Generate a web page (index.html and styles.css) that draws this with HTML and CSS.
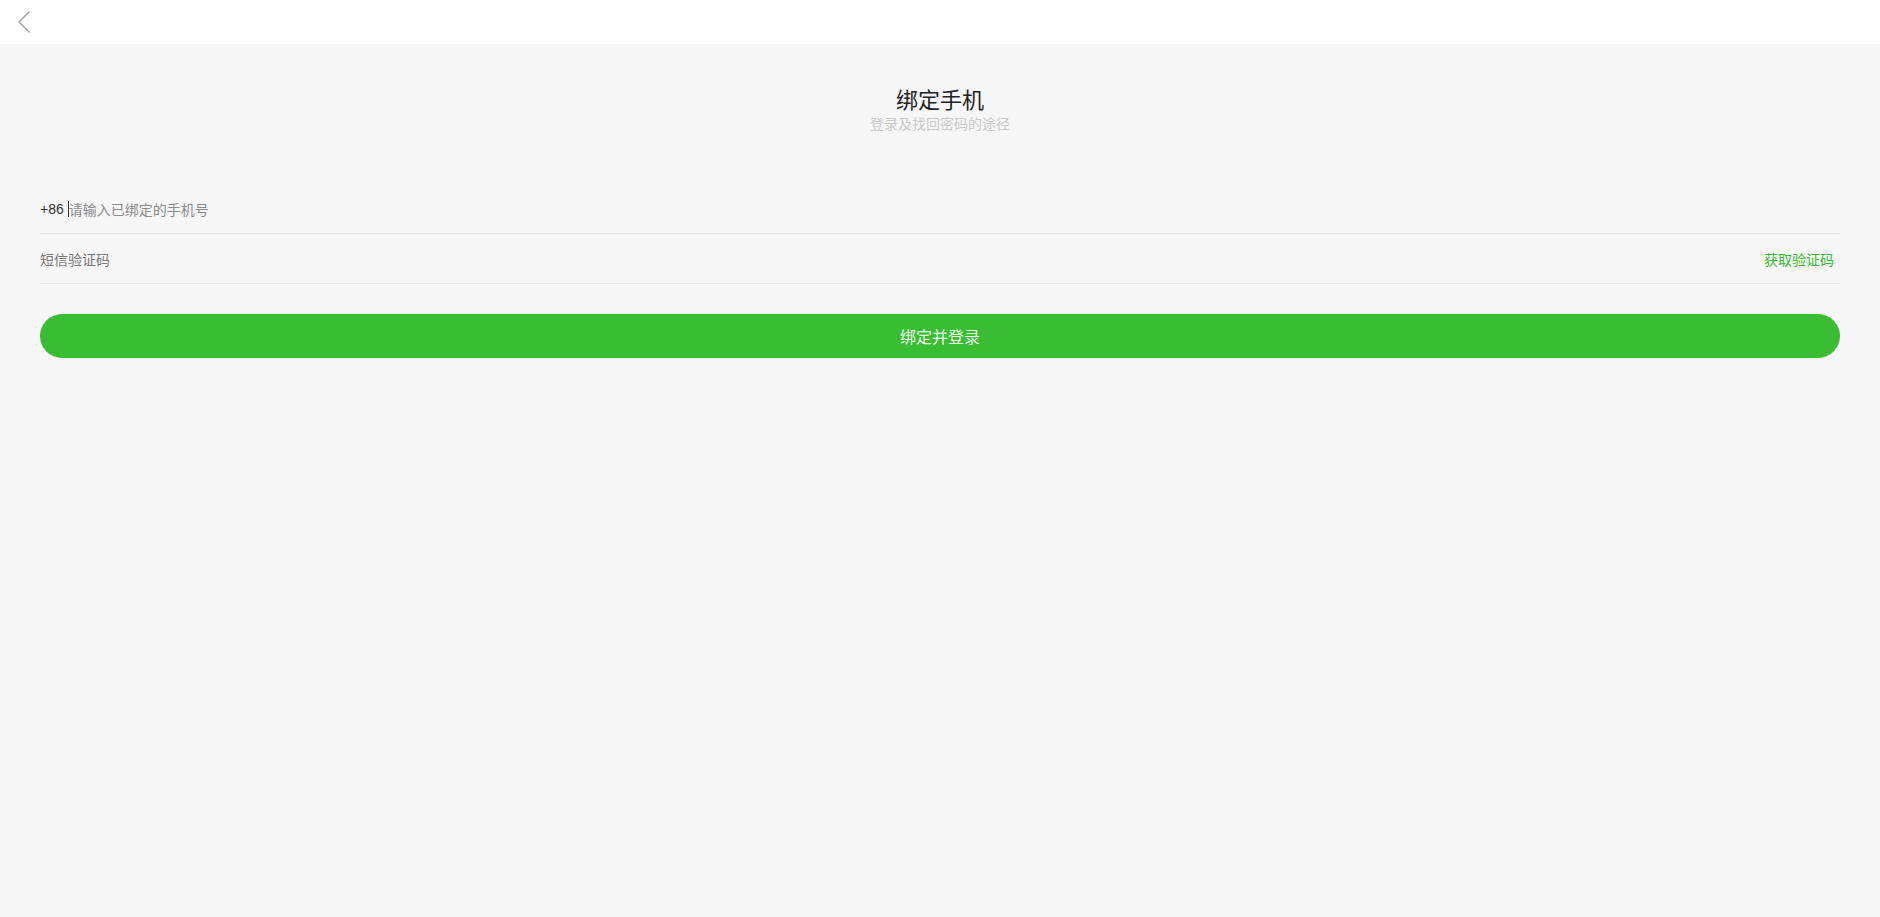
FILE: index.html
```html
<!DOCTYPE html>
<html lang="zh-CN">
<head>
<meta charset="utf-8">
<title>绑定手机</title>
<link rel="stylesheet" href="styles.css">
</head>
<body>
<header class="topbar">
  <button class="back" aria-label="返回">
    <svg width="14" height="22" viewBox="0 0 14 22"><path d="M12 1 L2 11 L12 21" fill="none" stroke="#a6a6a6" stroke-width="1.6" stroke-linecap="round" stroke-linejoin="round"/></svg>
  </button>
</header>
<main class="page">
  <div class="heading">
    <h1 class="title">绑定手机</h1>
    <p class="subtitle">登录及找回密码的途径</p>
  </div>
  <form class="form">
    <div class="row">
      <span class="prefix">+86</span>
      <span class="cursor"></span>
      <span class="placeholder">请输入已绑定的手机号</span>
    </div>
    <div class="row">
      <span class="placeholder code">短信验证码</span>
      <span class="getcode">获取验证码</span>
    </div>
    <button type="button" class="submit">绑定并登录</button>
  </form>
</main>
</body>
</html>
```
FILE: styles.css
```css
* { box-sizing: border-box; }
html, body {
  margin: 0;
  padding: 0;
  height: 100%;
}
body {
  background: #f6f6f6;
  font-family: "Noto Sans", "Noto Sans CJK SC", sans-serif;
  color: #333;
}
.topbar {
  height: 44px;
  background: #fff;
  display: flex;
  align-items: center;
}
.back {
  border: 0;
  background: transparent;
  padding: 0;
  margin-left: 17px;
  margin-top: -1px;
  width: 14px;
  height: 22px;
  display: flex;
}
.page {
  padding: 0 40px;
}
.heading {
  padding-top: 40px;
  text-align: center;
}
.title {
  margin: 0;
  font-family: "Noto Sans CJK SC", sans-serif;
  font-weight: 400;
  font-size: 22px;
  line-height: 29px;
  color: #222;
}
.subtitle {
  margin: 0;
  font-family: "Noto Sans CJK SC", sans-serif;
  font-size: 14px;
  line-height: 20px;
  color: #c8c8c8;
}
.form {
  margin-top: 51px;
}
.row {
  height: 50px;
  border-bottom: 1px solid #e4e4e4;
  display: flex;
  align-items: center;
  font-size: 14px;
}
.prefix {
  color: #333;
  font-family: "Liberation Sans", sans-serif;
  font-size: 14px;
}
.cursor {
  width: 1px;
  height: 16px;
  background: #333;
  margin-left: 4px;
}
.placeholder {
  font-family: "Noto Sans CJK SC", sans-serif;
  color: #8a8a8a;
}
.code {
  color: #777;
  flex: 1;
}
.getcode {
  font-family: "Noto Sans CJK SC", sans-serif;
  color: #3ab833;
  margin-right: 6px;
}
.submit {
  display: block;
  width: 100%;
  margin-top: 30px;
  height: 44px;
  border: 0;
  border-radius: 22px;
  background: #39bd32;
  color: #eef9ec;
  font-family: "Noto Sans CJK SC", sans-serif;
  font-size: 16px;
}
```
